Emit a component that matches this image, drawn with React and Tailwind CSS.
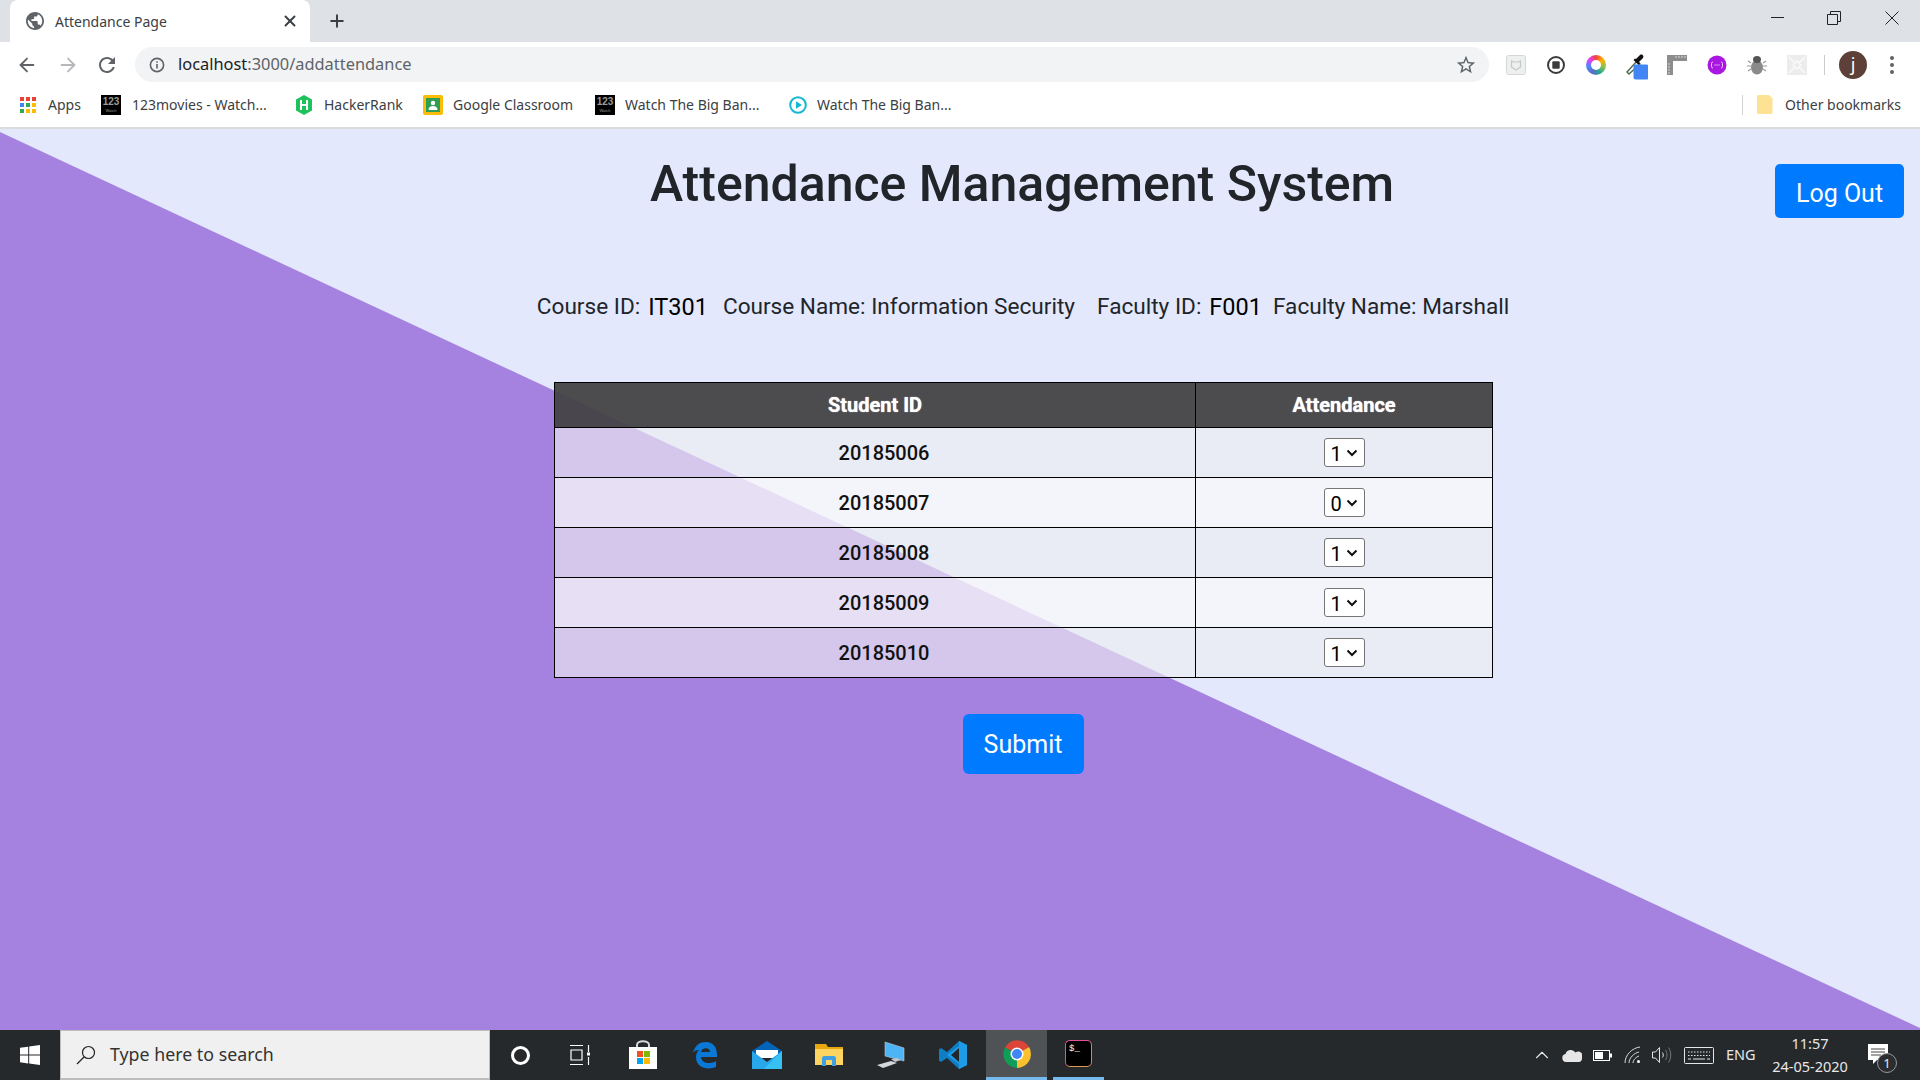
import React from 'react';
import { ArrowLeft, ArrowRight, Plus, X, ChevronUp } from 'lucide-react';

const uiFont = "font-['Noto_Sans',sans-serif]";

const Globe = () => (
  <svg viewBox="2 2 20 20" className="w-[18px] h-[18px]" fill="#5f6368">
    <path d="M12 2C6.48 2 2 6.48 2 12s4.48 10 10 10 10-4.48 10-10S17.52 2 12 2zm-1 17.93c-3.95-.49-7-3.85-7-7.93 0-.62.08-1.21.21-1.79L9 15v1c0 1.1.9 2 2 2v1.93zm6.9-2.54c-.26-.81-1-1.39-1.9-1.39h-1v-3c0-.55-.45-1-1-1H8v-2h2c.55 0 1-.45 1-1V7h2c1.1 0 2-.9 2-2v-.41c2.93 1.19 5 4.06 5 7.41 0 2.08-.8 3.97-2.1 5.39z" />
  </svg>
);

const Reload = () => (
  <svg viewBox="0 0 24 24" className="w-[24px] h-[24px]" fill="#5f6368">
    <path d="M17.65 6.35C16.2 4.9 14.21 4 12 4c-4.42 0-7.99 3.58-7.99 8s3.57 8 7.99 8c3.73 0 6.84-2.55 7.73-6h-2.08c-.82 2.33-3.04 4-5.65 4-3.31 0-6-2.69-6-6s2.69-6 6-6c1.66 0 3.14.69 4.22 1.78L13 11h7V4l-2.35 2.35z" />
  </svg>
);

const InfoIcon = () => (
  <svg viewBox="0 0 16 16" className="w-[16px] h-[16px]" fill="none" stroke="#5f6368" strokeWidth="1.6">
    <circle cx="8" cy="8" r="6.6" />
    <path d="M8 7v4.5M8 4.2v1.6" />
  </svg>
);

const StarIcon = () => (
  <svg viewBox="0 0 24 24" className="w-[22px] h-[22px]" fill="#5f6368">
    <path d="M22 9.24l-7.19-.62L12 2 9.19 8.63 2 9.24l5.46 4.73L5.82 21 12 17.27 18.18 21l-1.63-7.03L22 9.24zM12 15.4l-3.76 2.27 1-4.28-3.32-2.88 4.38-.38L12 6.1l1.71 4.04 4.38.38-3.32 2.88 1 4.28L12 15.4z" />
  </svg>
);

const AppsIcon = () => (
  <svg viewBox="0 0 16 16" className="w-[16px] h-[16px]">
    <rect x="0" y="0" width="4" height="4" fill="#ea4335" />
    <rect x="6" y="0" width="4" height="4" fill="#ea4335" />
    <rect x="12" y="0" width="4" height="4" fill="#ea4335" />
    <rect x="0" y="6" width="4" height="4" fill="#4285f4" />
    <rect x="6" y="6" width="4" height="4" fill="#34a853" />
    <rect x="12" y="6" width="4" height="4" fill="#fbbc05" />
    <rect x="0" y="12" width="4" height="4" fill="#34a853" />
    <rect x="6" y="12" width="4" height="4" fill="#fbbc05" />
    <rect x="12" y="12" width="4" height="4" fill="#fbbc05" />
  </svg>
);

const MoviesIcon = () => (
  <div className="w-[20px] h-[20px] bg-black text-[#9a9a9a] flex flex-col items-center font-['Liberation_Sans',sans-serif] leading-none">
    <span className="text-[10px] font-bold mt-[2px]">123</span>
    <span className="text-[4px] mt-[2px]">Watch</span>
  </div>
);

const HackerIcon = () => (
  <svg viewBox="0 0 18 20" className="w-[18px] h-[20px]">
    <path d="M9 0l8 4.5v11L9 20l-8-4.5v-11z" fill="#1fc25a" />
    <path d="M6 5v10M12 5v10M6 10h6" stroke="#fff" strokeWidth="2" fill="none" />
  </svg>
);

const ClassroomIcon = () => (
  <svg viewBox="0 0 20 20" className="w-[20px] h-[20px]">
    <rect x="0" y="0" width="20" height="20" rx="2" fill="#fbbc05" />
    <rect x="3" y="3" width="14" height="14" fill="#2f9e53" />
    <circle cx="10" cy="8" r="2.2" fill="#fff" />
    <path d="M5.5 15c0-3 2-4 4.5-4s4.5 1 4.5 4z" fill="#fff" />
  </svg>
);

const PlayIcon = () => (
  <svg viewBox="0 0 18 18" className="w-[18px] h-[18px]">
    <circle cx="9" cy="9" r="7.8" fill="none" stroke="#15b8cf" strokeWidth="2" />
    <path d="M7 5.2l6 3.8-6 3.8z" fill="#15b8cf" />
  </svg>
);

const bookmarks = [
  { label: 'Apps', icon: <AppsIcon />, box: 'w-[81px]', gap: 'gap-[12px]' },
  { label: '123movies - Watch...', icon: <MoviesIcon />, box: 'w-[194px]', gap: 'gap-[11px]' },
  { label: 'HackerRank', icon: <HackerIcon />, box: 'w-[128px]', gap: 'gap-[11px]' },
  { label: 'Google Classroom', icon: <ClassroomIcon />, box: 'w-[172px]', gap: 'gap-[10px]' },
  { label: 'Watch The Big Ban...', icon: <MoviesIcon />, box: 'w-[194px]', gap: 'gap-[10px]' },
  { label: 'Watch The Big Ban...', icon: <PlayIcon />, box: 'w-[170px]', gap: 'gap-[10px]' },
];

const Shield = () => (
  <svg viewBox="0 0 20 20" className="w-[20px] h-[20px]">
    <rect x="0.5" y="0.5" width="19" height="19" rx="2" fill="#eef0f0" stroke="#d5d8d8" />
    <path d="M5.5 6l2 1h5l2-1v6l-4.5 3-4.5-3z" fill="none" stroke="#c3c8c8" strokeWidth="1.2" />
  </svg>
);

const RecordIcon = () => (
  <svg viewBox="0 0 20 20" className="w-[20px] h-[20px]">
    <circle cx="10" cy="10" r="8" fill="none" stroke="#3c3c3c" strokeWidth="2" />
    <rect x="6.3" y="6.3" width="7.4" height="7.4" rx="1" fill="#3c3c3c" />
  </svg>
);

const ColorWheel = () => (
  <div className="w-[20px] h-[20px] rounded-full bg-[conic-gradient(#f44336,#ffb300,#8bc34a,#26a69a,#5c6bc0,#448aff,#e040fb,#f44336)] flex items-center justify-center">
    <div className="w-[10px] h-[10px] rounded-full bg-white" />
  </div>
);

const Dropper = () => (
  <div className="relative w-[24px] h-[27px]">
    <svg viewBox="0 0 24 27" className="w-[24px] h-[27px]">
      <path d="M3 19L13 8l3 3L5 21z" fill="#fff" stroke="#4a6a50" strokeWidth="1.4" />
      <path d="M12 6l4-4c2-1.5 4.5 1 3 3l-4 4 1 1.5-1.5 1.5-5-5 1.5-1.5z" fill="#111" />
      <rect x="9.5" y="11.5" width="15" height="15" rx="2" fill="#4285f4" />
    </svg>
  </div>
);

const Ruler = () => (
  <svg viewBox="0 0 20 20" className="w-[20px] h-[20px]">
    <path d="M0 0h20v6H6v14H0z" fill="#8d8d8d" />
    <path d="M9 1v2M12 1v2M15 1v2M18 1v2M1 9h2M1 12h2M1 15h2M1 18h2" stroke="#d8d8d8" strokeWidth="1" />
  </svg>
);

const PurpleBot = () => (
  <svg viewBox="0 0 20 20" className="w-[20px] h-[20px]">
    <circle cx="10" cy="10" r="9.5" fill="#a818e0" />
    <path d="M6 7c-1.5 0-1.5 1-1.5 3s0 3 1.5 3M14 7c1.5 0 1.5 1 1.5 3s0 3-1.5 3" stroke="#f0d0ff" strokeWidth="1" fill="none" />
    <path d="M7.5 10h1M9.5 10h1M11.5 10h1" stroke="#fff" strokeWidth="1.2" />
  </svg>
);

const Bug = () => (
  <svg viewBox="0 0 20 20" className="w-[20px] h-[20px]">
    <path d="M4 8L1 6M4 11H0M4 14l-3 2M16 8l3-2M16 11h4M16 14l3 2" stroke="#9a9a9a" strokeWidth="1.2" />
    <ellipse cx="10" cy="12.5" rx="6" ry="7" fill="#8a8a8a" />
    <ellipse cx="10" cy="4.5" rx="4" ry="3.5" fill="#555" />
  </svg>
);

const PatternBox = () => (
  <svg viewBox="0 0 20 20" className="w-[20px] h-[20px]">
    <rect width="20" height="20" fill="#ececec" />
    <path d="M2 2l6 6M18 2l-6 6M2 18l6-6M18 18l-6-6M10 6l4 4-4 4-4-4z" stroke="#fafafa" strokeWidth="1.4" fill="none" />
  </svg>
);

const Bookmarks = () => (
  <div className={`h-[42px] flex items-center pl-[20px] pr-[19px] pb-[5px] border-b-[2px] border-[#dadce0] text-[14px] text-[#3c4043] ${uiFont}`}>
    {bookmarks.map((b, i) => (
      <div key={i} className={`flex items-center ${b.box} ${b.gap}`}>
        {b.icon}
        <span className="whitespace-nowrap">{b.label}</span>
      </div>
    ))}
    <div className="ml-auto flex items-center">
      <div className="w-px h-[20px] bg-[#d0d2d5] mr-[14px]" />
      <svg viewBox="0 0 16 19" className="w-[16px] h-[19px] mr-[12px]">
        <path d="M0 1.5C0 .7.7 0 1.5 0H12l3.5 3.5V17.5c0 .8-.7 1.5-1.5 1.5H1.5C.7 19 0 18.3 0 17.5z" fill="#fde293" />
      </svg>
      <span className="whitespace-nowrap">Other bookmarks</span>
    </div>
  </div>
);

const Toolbar = () => (
  <div className="h-[45px] flex items-center">
    <div className="flex items-center w-[135px] pl-[16px] text-[#5f6368]">
      <ArrowLeft size={22} strokeWidth={2} />
      <ArrowRight size={22} strokeWidth={2} className="ml-[19px] text-[#b5b7ba]" />
      <div className="ml-[16px]"><Reload /></div>
    </div>
    <div className={`w-[1354px] h-[35px] bg-[#f1f3f4] rounded-full flex items-center pl-[14px] pr-[12px] text-[16.4px] ${uiFont}`}>
      <InfoIcon />
      <span className="ml-[13px] text-[#202124]">localhost</span>
      <span className="text-[#5f6368]">:3000/addattendance</span>
      <div className="ml-auto"><StarIcon /></div>
    </div>
    <div className="flex-1 flex items-center pl-[17px]">
      <Shield />
      <div className="ml-[20px]"><RecordIcon /></div>
      <div className="ml-[20px]"><ColorWheel /></div>
      <div className="ml-[18px] mt-[4px]"><Dropper /></div>
      <div className="ml-[19px]"><Ruler /></div>
      <div className="ml-[20px]"><PurpleBot /></div>
      <div className="ml-[20px]"><Bug /></div>
      <div className="ml-[20px]"><PatternBox /></div>
      <div className="ml-[17px] w-px h-[20px] bg-[#c9cbce]" />
      <div className={`ml-[14px] w-[28px] h-[28px] rounded-full bg-[#5d4037] text-white text-[18px] flex items-center justify-center ${uiFont}`}>j</div>
      <div className="ml-[23px] flex flex-col gap-[3px]">
        <div className="w-[4px] h-[4px] rounded-full bg-[#5f6368]" />
        <div className="w-[4px] h-[4px] rounded-full bg-[#5f6368]" />
        <div className="w-[4px] h-[4px] rounded-full bg-[#5f6368]" />
      </div>
    </div>
  </div>
);

const TabStrip = () => (
  <div className="h-[42px] bg-[#dee1e6] flex items-end pl-[10px]">
    <div className={`w-[300px] h-[42px] bg-white rounded-t-[8px] flex items-center pl-[16px] pr-[11px] ${uiFont}`}>
      <Globe />
      <span className="ml-[11px] text-[14px] text-[#3c4043]">Attendance Page</span>
      <X size={18} strokeWidth={2.6} className="ml-auto text-[#3c4043]" />
    </div>
    <Plus size={20} strokeWidth={2.4} className="ml-[17px] mb-[11px] text-[#3c4043]" />
    <div className="ml-auto h-[42px] flex items-start pt-[10px] pr-[21px] text-[#222]">
      <svg viewBox="0 0 14 14" className="w-[14px] h-[14px]"><path d="M0 7.5h13" stroke="#222" strokeWidth="1" /></svg>
      <svg viewBox="0 0 14 14" className="w-[14px] h-[14px] ml-[42px] mt-[1px]"><path d="M.5 3.5h10v10H.5zM3.5 3.5v-3h10v10h-3" stroke="#222" strokeWidth="1" fill="none" /></svg>
      <svg viewBox="0 0 14 14" className="w-[14px] h-[14px] ml-[44px] mt-[1px]"><path d="M.5.5l13 13M13.5.5l-13 13" stroke="#222" strokeWidth="1" /></svg>
    </div>
  </div>
);

const rows = [
  { id: '20185006', value: '1', bg: 'bg-[#ecedf1]/65' },
  { id: '20185007', value: '0', bg: 'bg-[#f7f8fa]/80' },
  { id: '20185008', value: '1', bg: 'bg-[#ecedf1]/65' },
  { id: '20185009', value: '1', bg: 'bg-[#f7f8fa]/80' },
  { id: '20185010', value: '1', bg: 'bg-[#ecedf1]/65' },
];

const AttendanceSelect = ({ value }) => (
  <div className="relative inline-block w-[41px] h-[29px] mb-[2px] align-middle">
    <select
      defaultValue={value}
      className="appearance-none w-[41px] h-[29px] pl-[6px] bg-white border border-[#767676] rounded-[3px] text-black text-left block"
    >
      <option value="1">1</option>
      <option value="0">0</option>
    </select>
    <svg viewBox="0 0 12 8" className="absolute right-[7px] top-[11px] w-[12px] h-[8px] pointer-events-none">
      <path d="M1.5 1.5L6 6l4.500-4.500" fill="none" stroke="#111" strokeWidth="2" />
    </svg>
  </div>
);

const AttendanceTable = () => (
  <table className="w-[939px] ml-[1px] table-fixed border-collapse mt-[60px] text-[20px]">
    <thead>
      <tr className="h-[45px] bg-[#434345]/95 text-white">
        <th className="w-[641px] border border-black font-bold [text-shadow:0_0_1px_#fff]">Student ID</th>
        <th className="border border-black font-bold [text-shadow:0_0_1px_#fff]">Attendance</th>
      </tr>
    </thead>
    <tbody>
      {rows.map((row) => (
        <tr key={row.id} className={`h-[50px] ${row.bg}`}>
          <td className="border border-black text-center font-medium pl-[18px] text-[#111]">{row.id}</td>
          <td className="border border-black text-center align-middle">
            <AttendanceSelect value={row.value} />
          </td>
        </tr>
      ))}
    </tbody>
  </table>
);

const Page = () => (
  <main className="relative flex-1 bg-[#e3e8fd] font-['Roboto',sans-serif] text-[#212529] overflow-hidden">
    <div className="absolute inset-0 bg-[#a682e0] [clip-path:polygon(0_3px,100%_899px,100%_100%,0_100%)]" />
    <div className="relative">
      <div className="flex items-start pl-[269px] pr-[16px] pt-[26px]">
        <h1 className="flex-1 text-center text-[50px] leading-[58px] font-medium">Attendance Management System</h1>
        <button className="mt-[9px] w-[129px] h-[54px] pt-[5px] bg-[#007bff] text-white text-[25px] rounded-[5px]">Log Out</button>
      </div>
      <div className="flex flex-col items-center pl-[126px]">
        <div className="flex items-center mt-[72px] text-[22.6px] leading-[29px] font-normal whitespace-nowrap">
          <span>Course ID:</span>
          <span className="ml-[8px] mt-[3px] text-[23.5px] text-black">IT301</span>
          <span className="ml-[15px]">Course Name: Information Security</span>
          <span className="ml-[22px]">Faculty ID:</span>
          <span className="ml-[8px] mt-[3px] text-[23.5px] text-black">F001</span>
          <span className="ml-[11px]">Faculty Name: Marshall</span>
        </div>
        <AttendanceTable />
        <button className="mt-[36px] w-[121px] h-[60px] pt-[2px] bg-[#007bff] text-white text-[25px] rounded-[6px]">Submit</button>
      </div>
    </div>
  </main>
);

const WindowsLogo = () => (
  <svg viewBox="0 0 20 20" className="w-[20px] h-[20px]" fill="#fff">
    <path d="M0 2.8l8.2-1.1v7.9H0zM9.2 1.5L20 0v9.6H9.2zM0 10.6h8.2v7.8L0 17.2zM9.2 10.6H20V20L9.2 18.6z" />
  </svg>
);

const SearchIcon = () => (
  <svg viewBox="0 0 20 20" className="w-[20px] h-[20px]" fill="none" stroke="#222" strokeWidth="1.2">
    <circle cx="12.5" cy="7.5" r="6" />
    <path d="M8 12L1 19" />
  </svg>
);

const TaskView = () => (
  <svg viewBox="0 0 22 22" className="w-[22px] h-[22px]" fill="none" stroke="#fff" strokeWidth="1.2">
    <path d="M1 1.5h13M1 20.5h13M2 6h11v10H2zM19.5 1v7M19.5 13v8" />
    <rect x="18" y="8.5" width="3" height="3" fill="#fff" stroke="none" />
  </svg>
);

const StoreIcon = () => (
  <svg viewBox="0 0 30 30" className="w-[30px] h-[30px]">
    <path d="M9 8V5c0-5 12-5 12 0v3" fill="none" stroke="#d8d8d8" strokeWidth="2" />
    <rect x="1" y="7" width="28" height="22" fill="#fff" />
    <rect x="9" y="11" width="6" height="6" fill="#f25022" />
    <rect x="16" y="11" width="6" height="6" fill="#7fba00" />
    <rect x="9" y="18" width="6" height="6" fill="#00a4ef" />
    <rect x="16" y="18" width="6" height="6" fill="#ffb900" />
  </svg>
);

const EdgeIcon = () => (
  <svg viewBox="0 0 26 28" className="w-[26px] h-[28px]">
    <path d="M1 12C3 4 8 1 14 1c7 0 11 5 11 13v2H9c0 6 9 8 15 4v6c-7 3-20 2-20-10 0-3 1-5 3-7-3 0-5 1-6 3zM9 11h9c0-5-8-5-9 0z" fill="#0a78d4" />
  </svg>
);

const MailIcon = () => (
  <svg viewBox="0 0 30 30" className="w-[30px] h-[30px]">
    <path d="M0 11L15 1l15 10v4H0z" fill="#0364b8" />
    <path d="M4 10h22v8H4z" fill="#fff" />
    <path d="M0 11l15 11 15-11v18H0z" fill="#28a8ea" />
    <path d="M30 11v18H12z" fill="#35c1f1" />
  </svg>
);

const FolderIcon = () => (
  <svg viewBox="0 0 28 24" className="w-[28px] h-[24px]">
    <path d="M0 1h11l2 3h15v18H0z" fill="#e8a70e" />
    <path d="M0 6h28v16H0z" fill="#fdd45f" />
    <path d="M7 23v-8c0-1 1-2 2-2h10c1 0 2 1 2 2v8h-4v-6h-6v6z" fill="#3f9fe0" />
  </svg>
);

const DeviceIcon = () => (
  <svg viewBox="0 0 30 28" className="w-[30px] h-[28px]">
    <path d="M9 1l19 6v13L9 15z" fill="#4db5f5" stroke="#bcd" strokeWidth="0.6" />
    <path d="M1 24l14-4 6 2-14 5z" fill="#d5d8da" />
    <path d="M15 18l6-1 4 2-6 2z" fill="#c3c6c8" />
  </svg>
);

const VsCodeIcon = () => (
  <svg viewBox="0 0 30 30" className="w-[30px] h-[30px]">
    <path d="M21 1l8 4v20l-8 4-12-11-6 4-2-1.500v-11L3 8l6 4z" fill="#0f7ec4" />
    <path d="M21 1l8 4v20l-8 4zM9 15l12 9V6z" fill="#1f9ce8" />
    <path d="M21 8l-8 7 8 7z" fill="#24272a" />
  </svg>
);

const ChromeIcon = () => (
  <svg viewBox="0 0 28 28" className="w-[28px] h-[28px]">
    <path d="M14 14L2 7.500A14 14 0 0 1 26.100 7z" fill="#db4437" />
    <path d="M14 14L26.100 7A14 14 0 0 1 14 28z" fill="#fbc02d" />
    <path d="M14 14L14 28A14 14 0 0 1 2 7.500z" fill="#0f9d58" />
    <circle cx="14" cy="14" r="6.500" fill="#fff" />
    <circle cx="14" cy="14" r="5" fill="#4285f4" />
  </svg>
);

const TerminalIcon = () => (
  <div className="w-[27px] h-[27px] rounded-[5px] border-[1.5px] border-[#e0529c] border-b-[#e09a4f] border-r-[#e07a7a] bg-black text-white text-[9px] leading-none font-['Liberation_Mono',monospace] pl-[3px] pt-[4px]">$_</div>
);

const Tray = () => (
  <div className={`ml-auto flex items-center h-full text-[#e8e8e8] ${uiFont}`}>
    <ChevronUp size={22} strokeWidth={1.2} />
    <svg viewBox="0 0 20 13" className="ml-[9px] w-[20px] h-[13px]" fill="#e6e6e6">
      <path d="M4 13a4 4 0 0 1-.5-7.900A5.500 5.500 0 0 1 13.500 3.500 4.500 4.500 0 0 1 20 9.500c0 2-1.500 3.500-3 3.500z" />
    </svg>
    <svg viewBox="0 0 19 11" className="ml-[11px] w-[19px] h-[11px]" fill="none" stroke="#fff">
      <rect x="0.500" y="0.500" width="16" height="10" />
      <rect x="2" y="2" width="8" height="7" fill="#fff" stroke="none" />
      <rect x="17" y="3.500" width="2" height="4" fill="#fff" stroke="none" />
    </svg>
    <svg viewBox="0 0 18 18" className="ml-[12px] w-[18px] h-[18px]" fill="none" stroke="#d8d8d8" strokeWidth="1">
      <path d="M1 17C1 9 8 2 16 1M5 17c0-5 5-10 10-11M9 17c0-3 3-6 6-7" />
      <circle cx="14.500" cy="15.500" r="1.500" fill="#fff" stroke="none" />
    </svg>
    <svg viewBox="0 0 20 18" className="ml-[10px] w-[20px] h-[18px]" fill="none" strokeWidth="1">
      <path d="M.5 6h3l4-4.500v15l-4-4.500h-3z" stroke="#e6e6e6" />
      <path d="M10.500 6.500c1 1.500 1 3.500 0 5" stroke="#e6e6e6" />
      <path d="M13.500 4c2 3 2 7 0 10M16.500 1.500c3 4.500 3 10.500 0 15" stroke="#777" />
    </svg>
    <svg viewBox="0 0 30 17" className="ml-[12px] w-[30px] h-[17px]" fill="none" stroke="#e6e6e6">
      <rect x="0.500" y="0.500" width="29" height="16" rx="1" />
      <path d="M4 5h22M4 8.500h22" strokeDasharray="1.500 1.500" />
      <path d="M4 12h3M9 12h12M23 12h3" />
    </svg>
    <span className="ml-[12px] text-[14.5px] w-[31px]">ENG</span>
    <div className="ml-[15px] w-[76px] flex flex-col items-center text-[14.5px] leading-[23px]">
      <span>11:57</span>
      <span className="whitespace-nowrap">24-05-2020</span>
    </div>
    <div className="relative ml-[20px] mr-[32px] w-[20px] h-[22px]">
      <svg viewBox="0 0 20 22" className="w-[20px] h-[22px]">
        <path d="M0 0h20v16H9l-4 4v-4H0z" fill="#fff" />
        <path d="M3 5h14M3 8h14M3 11h10" stroke="#444" strokeWidth="1" />
      </svg>
      <div className="absolute left-[9px] top-[9px] w-[20px] h-[20px] rounded-full border border-[#999] bg-[#2a2e31] text-[13px] leading-[18px] text-center">1</div>
    </div>
  </div>
);

const Taskbar = () => (
  <div className="h-[50px] bg-[#25292c] flex items-center">
    <div className="w-[60px] flex justify-center"><WindowsLogo /></div>
    <div className={`w-[430px] h-[50px] bg-[#f0f0f0] border border-[#bdbdbd] border-b-[2px] flex items-center pl-[15px] text-[17.8px] text-[#333] ${uiFont}`}>
      <SearchIcon />
      <span className="ml-[14px]">Type here to search</span>
    </div>
    <div className="w-[60px] flex justify-center"><div className="w-[19px] h-[19px] rounded-full border-[3px] border-white" /></div>
    <div className="w-[60px] flex justify-center"><TaskView /></div>
    <div className="w-[63px] ml-[1px] flex justify-center"><StoreIcon /></div>
    <div className="w-[62px] flex justify-center"><EdgeIcon /></div>
    <div className="w-[62px] flex justify-center"><MailIcon /></div>
    <div className="w-[62px] flex justify-center"><FolderIcon /></div>
    <div className="w-[62px] flex justify-center"><DeviceIcon /></div>
    <div className="w-[62px] flex justify-center"><VsCodeIcon /></div>
    <div className="ml-[2px] w-[61px] h-[50px] bg-[#505355] border-b-[3px] border-[#76b9ed] flex items-center justify-center"><ChromeIcon /></div>
    <div className="ml-[6px] w-[51px] h-[50px] border-b-[3px] border-[#76b9ed] flex items-center justify-center"><TerminalIcon /></div>
    <Tray />
  </div>
);

export default function App() {
  return (
    <div className="h-screen flex flex-col overflow-hidden bg-white">
      <TabStrip />
      <Toolbar />
      <Bookmarks />
      <Page />
      <Taskbar />
    </div>
  );
}
